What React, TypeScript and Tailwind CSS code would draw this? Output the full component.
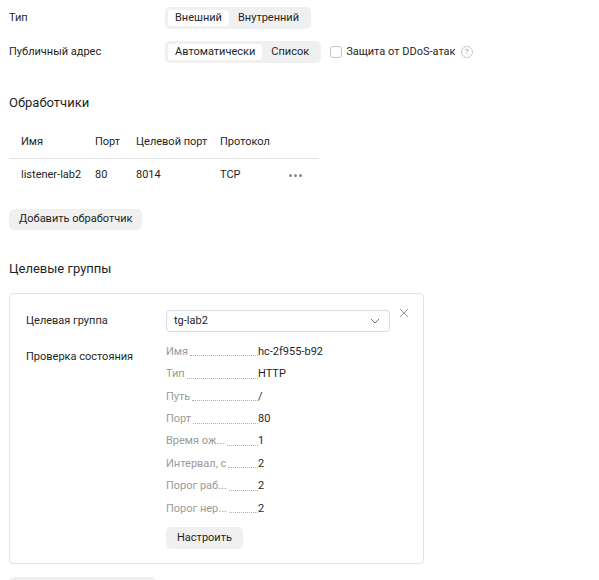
import React from "react";

const health: [string, string][] = [
  ["Имя", "hc-2f955-b92"],
  ["Тип", "HTTP"],
  ["Путь", "/"],
  ["Порт", "80"],
  ["Время ож...", "1"],
  ["Интервал, с", "2"],
  ["Порог раб...", "2"],
  ["Порог нер...", "2"],
];

function Segmented({ items, active }: { items: string[]; active: number }) {
  return (
    <div className="flex items-center rounded-[5px] bg-[#f0f0f0] p-[3px] h-[22px]">
      {items.map((it, i) => (
        <div
          key={it}
          className={`h-[16px] flex items-center rounded-[3px] ${
            i === active ? "bg-white px-[7px]" : "px-[9px]"
          }`}
        >
          {it}
        </div>
      ))}
    </div>
  );
}

export default function App() {
  return (
    <div
      className="bg-white w-[599px] h-[580px] overflow-hidden text-[11px] text-[#1f1f1f] pl-[9px]"
      style={{ fontFamily: "Roboto, 'Noto Sans', sans-serif" }}
    >
      <div className="pt-[7px] flex items-center">
        <div className="w-[156px]">Тип</div>
        <Segmented items={["Внешний", "Внутренний"]} active={0} />
      </div>
      <div className="mt-[12px] flex items-center">
        <div className="w-[156px]">Публичный адрес</div>
        <Segmented items={["Автоматически", "Список"]} active={0} />
        <div className="ml-[9px] flex items-center">
          <span className="w-[12px] h-[12px] border border-[#c8c8c8] rounded-[3px] mr-[4px]" />
          <span>Защита от DDoS-атак</span>
          <span className="ml-[5px] w-[12px] h-[12px] rounded-full border border-[#c8c8c8] text-[#999] text-[8px] flex items-center justify-center">
            ?
          </span>
        </div>
      </div>

      <div className="mt-[30px] text-[13px]">Обработчики</div>

      <div className="mt-[14px] w-[310px]">
        <div className="flex items-center h-[32px] border-b border-[#e5e5e5]">
          <div className="pl-[12px] w-[86px]">Имя</div>
          <div className="w-[41px]">Порт</div>
          <div className="w-[84px]">Целевой порт</div>
          <div>Протокол</div>
        </div>
        <div className="flex items-center h-[33px]">
          <div className="pl-[12px] w-[86px]">listener-lab2</div>
          <div className="w-[41px]">80</div>
          <div className="w-[84px]">8014</div>
          <div className="w-[69px]">TCP</div>
          <div className="flex gap-[2px]">
            <span className="w-[3px] h-[3px] rounded-full bg-[#888]" />
            <span className="w-[3px] h-[3px] rounded-full bg-[#888]" />
            <span className="w-[3px] h-[3px] rounded-full bg-[#888]" />
          </div>
        </div>
      </div>

      <button className="mt-[17px] h-[21px] px-[10px] rounded-[5px] bg-[#f0f0f0]">
        Добавить обработчик
      </button>

      <div className="mt-[29px] text-[13px]">Целевые группы</div>

      <div className="mt-[15px] w-[415px] border border-[#e3e3e3] rounded-[4px] pl-[16px] pt-[16px] pb-[14px] relative">
        <button className="absolute right-[14px] top-[14px] text-[#999]">
          <svg width="10" height="10" viewBox="0 0 10 10" stroke="currentColor" strokeWidth="1">
            <path d="M1 1l8 8M9 1l-8 8" />
          </svg>
        </button>
        <div className="flex items-center">
          <div className="w-[140px]">Целевая группа</div>
          <div className="w-[224px] h-[22px] border border-[#dcdcdc] rounded-[4px] flex items-center justify-between pl-[7px] pr-[9px]">
            <span>tg-lab2</span>
            <svg width="10" height="6" viewBox="0 0 10 6" fill="none" stroke="#777" strokeWidth="1">
              <path d="M1 1l4 4 4-4" />
            </svg>
          </div>
        </div>
        <div className="flex mt-[6px]">
          <div className="w-[140px] pt-[11px]">Проверка состояния</div>
          <div className="flex flex-col">
            {health.map(([k, v]) => (
              <div key={k} className="flex items-end h-[22.4px] whitespace-nowrap">
                <div className="flex items-end w-[92px]">
                  <span className="text-[#9a9a9a]">{k}</span>
                  <span className="flex-1 ml-[2px] border-b border-dotted border-[#b0b0b0] mb-[4px]" />
                </div>
                <span>{v}</span>
              </div>
            ))}
            <button className="mt-[10px] self-start h-[22px] px-[11px] rounded-[5px] bg-[#f0f0f0]">
              Настроить
            </button>
          </div>
        </div>
      </div>

      <div className="mt-[13px] w-[147px] h-[22px] rounded-[5px] bg-[#f0f0f0]" />
    </div>
  );
}
